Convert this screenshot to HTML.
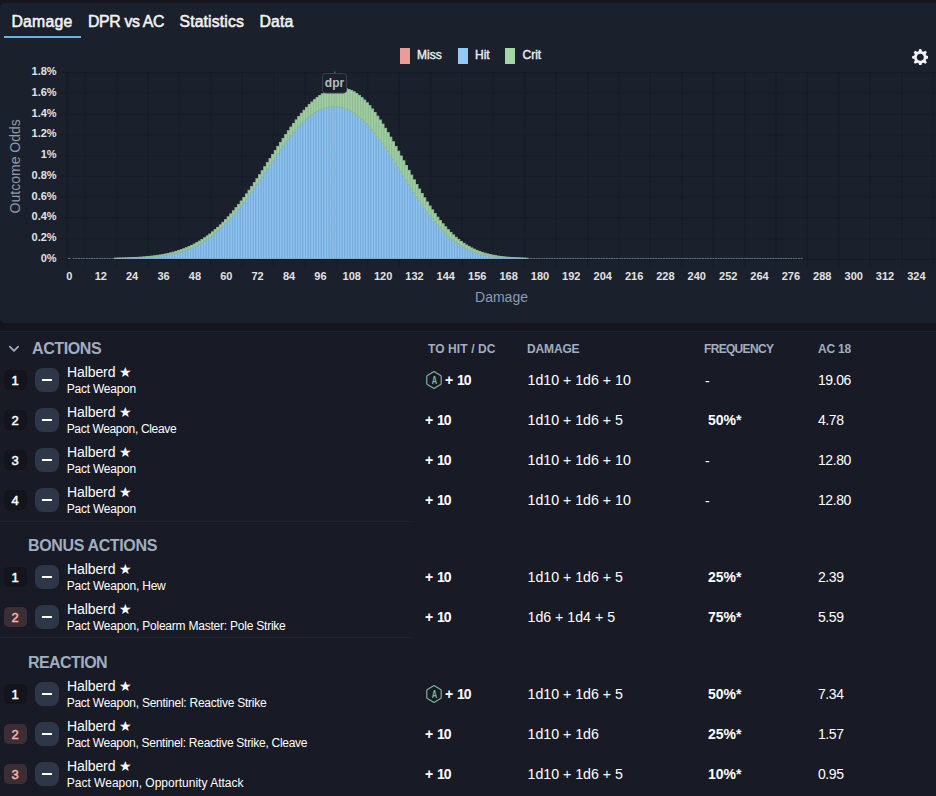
<!DOCTYPE html>
<html><head><meta charset="utf-8"><title>Damage</title>
<style>
*{box-sizing:border-box;margin:0;padding:0}
html,body{width:936px;height:796px;overflow:hidden;background:#14151d;font-family:"Liberation Sans",Arial,sans-serif;color:#fff}
.panel1{position:absolute;left:0;top:3px;width:936px;height:320px;background:#1a202c;border-radius:5px 0 0 5px}
.panel2{position:absolute;left:0;top:331px;width:936px;height:465px;background:#181a25;border-top:1px solid #1e2230}
.tabs{position:absolute;left:0;top:0;height:40px}
.tab{position:absolute;top:13px;font-size:15.8px;font-weight:400;-webkit-text-stroke:.55px #f2f2f2;color:#f2f2f2;white-space:nowrap;line-height:18px}
.ul{position:absolute;left:4px;top:36px;width:77px;height:2px;background:#63b3ed}
.chart{position:absolute;left:0;top:0}
.chart text{font-family:"Liberation Sans",Arial,sans-serif}
.grid line{stroke:rgba(0,0,0,.13);stroke-width:1}
.bars .h{fill:#8bc2f0;stroke:#7babd8;stroke-width:.95}
.bars .c{fill:#a0cfa2;stroke:#8fbc92;stroke-width:.95}
.tk{font-size:11px;font-weight:700;fill:#e2e2e2}
.lg{font-size:12px;font-weight:400;fill:#ececec;stroke:#ececec;stroke-width:.4px}
.gear{position:absolute;left:911.7px;top:48.6px}
.hd{position:absolute;font-weight:700;color:#a0aec0;white-space:nowrap}
.sec{font-size:16px;line-height:18px}
.col{font-size:12px;line-height:14px}
.row{position:absolute;left:0;width:936px;height:40px}
.bd{position:absolute;left:4px;top:10px;width:23px;height:20px;padding-right:1px;border-radius:5px;background:#13141c;color:#fff;font-size:13px;font-weight:400;-webkit-text-stroke:.5px;text-align:center;line-height:22px}
.bd.red{background:#3c2e35;color:#feb2b2}
.mn{position:absolute;left:35px;top:8px;width:24px;height:24px;border-radius:7.5px;background:#2d3748}
.mn i{position:absolute;left:7px;top:11px;width:10px;height:2px;background:#fff}
.nm{position:absolute;left:67px;top:3px;font-size:14px;letter-spacing:-.1px;line-height:18px;white-space:nowrap}
.sb{position:absolute;left:66.7px;top:22px;font-size:12px;line-height:14px;white-space:nowrap}
.th{position:absolute;top:11px;font-size:14px;font-weight:700;letter-spacing:-1.1px;word-spacing:2.2px;line-height:18px;white-space:nowrap;display:flex;align-items:center;height:18px}
.hex{display:block}
.dm{position:absolute;left:527.5px;top:11px;font-size:14.2px;line-height:18px;white-space:nowrap}
.fq{position:absolute;top:11px;font-size:14px;font-weight:700;line-height:18px;white-space:nowrap}
.fq.dash{font-weight:400;margin-top:1px}
.ac{position:absolute;left:818px;top:11px;font-size:14px;letter-spacing:-.42px;line-height:18px;white-space:nowrap}
.sep{position:absolute;left:0;width:412px;height:1px;background:#20232f}
</style></head><body>
<div class="panel1"></div>
<div class="panel2"></div>
<div class="tabs">
<div class="tab" style="left:11.5px;letter-spacing:.2px">Damage</div>
<div class="tab" style="left:88px;letter-spacing:-.33px">DPR vs AC</div>
<div class="tab" style="left:179.5px;letter-spacing:.13px">Statistics</div>
<div class="tab" style="left:259.5px;letter-spacing:.15px">Data</div>
<div class="ul"></div>
</div>
<svg class="chart" width="936" height="330" viewBox="0 0 936 330">
<g class="grid"><line x1="59" x2="936" y1="259.5" y2="259.5"/><line x1="59" x2="936" y1="238.7" y2="238.7"/><line x1="59" x2="936" y1="217.9" y2="217.9"/><line x1="59" x2="936" y1="197.2" y2="197.2"/><line x1="59" x2="936" y1="176.4" y2="176.4"/><line x1="59" x2="936" y1="155.6" y2="155.6"/><line x1="59" x2="936" y1="134.8" y2="134.8"/><line x1="59" x2="936" y1="114.1" y2="114.1"/><line x1="59" x2="936" y1="93.3" y2="93.3"/><line x1="59" x2="936" y1="72.5" y2="72.5"/><line x1="85.2" x2="85.2" y1="72" y2="267.5"/><line x1="116.6" x2="116.6" y1="72" y2="267.5"/><line x1="148.0" x2="148.0" y1="72" y2="267.5"/><line x1="179.4" x2="179.4" y1="72" y2="267.5"/><line x1="210.8" x2="210.8" y1="72" y2="267.5"/><line x1="242.2" x2="242.2" y1="72" y2="267.5"/><line x1="273.6" x2="273.6" y1="72" y2="267.5"/><line x1="305.0" x2="305.0" y1="72" y2="267.5"/><line x1="336.4" x2="336.4" y1="72" y2="267.5"/><line x1="367.8" x2="367.8" y1="72" y2="267.5"/><line x1="399.2" x2="399.2" y1="72" y2="267.5"/><line x1="430.6" x2="430.6" y1="72" y2="267.5"/><line x1="462.0" x2="462.0" y1="72" y2="267.5"/><line x1="493.4" x2="493.4" y1="72" y2="267.5"/><line x1="524.8" x2="524.8" y1="72" y2="267.5"/><line x1="556.2" x2="556.2" y1="72" y2="267.5"/><line x1="587.6" x2="587.6" y1="72" y2="267.5"/><line x1="619.0" x2="619.0" y1="72" y2="267.5"/><line x1="650.4" x2="650.4" y1="72" y2="267.5"/><line x1="681.8" x2="681.8" y1="72" y2="267.5"/><line x1="713.2" x2="713.2" y1="72" y2="267.5"/><line x1="744.6" x2="744.6" y1="72" y2="267.5"/><line x1="776.0" x2="776.0" y1="72" y2="267.5"/><line x1="807.4" x2="807.4" y1="72" y2="267.5"/><line x1="838.8" x2="838.8" y1="72" y2="267.5"/><line x1="870.2" x2="870.2" y1="72" y2="267.5"/><line x1="901.6" x2="901.6" y1="72" y2="267.5"/><line x1="933.0" x2="933.0" y1="72" y2="267.5"/><line x1="67.3" x2="67.3" y1="72" y2="267.5"/></g>
<g class="bars"><rect class="h" x="114.75" y="258.35" width="2.61" height="0.15"/><rect class="c" x="114.75" y="258.18" width="2.61" height="0.16"/><rect class="h" x="117.36" y="258.32" width="2.61" height="0.18"/><rect class="c" x="117.36" y="258.13" width="2.61" height="0.19"/><rect class="h" x="119.98" y="258.28" width="2.61" height="0.22"/><rect class="c" x="119.98" y="258.06" width="2.61" height="0.22"/><rect class="h" x="122.59" y="258.24" width="2.61" height="0.26"/><rect class="c" x="122.59" y="257.99" width="2.61" height="0.25"/><rect class="h" x="125.21" y="258.18" width="2.61" height="0.32"/><rect class="c" x="125.21" y="257.91" width="2.61" height="0.28"/><rect class="h" x="127.82" y="258.12" width="2.61" height="0.38"/><rect class="c" x="127.82" y="257.81" width="2.61" height="0.31"/><rect class="h" x="130.43" y="258.05" width="2.61" height="0.45"/><rect class="c" x="130.43" y="257.70" width="2.61" height="0.36"/><rect class="h" x="133.05" y="257.97" width="2.61" height="0.53"/><rect class="c" x="133.05" y="257.57" width="2.61" height="0.40"/><rect class="h" x="135.66" y="257.87" width="2.61" height="0.63"/><rect class="c" x="135.66" y="257.43" width="2.61" height="0.45"/><rect class="h" x="138.28" y="257.76" width="2.61" height="0.74"/><rect class="c" x="138.28" y="257.26" width="2.61" height="0.50"/><rect class="h" x="140.89" y="257.63" width="2.61" height="0.87"/><rect class="c" x="140.89" y="257.08" width="2.61" height="0.56"/><rect class="h" x="143.50" y="257.49" width="2.61" height="1.01"/><rect class="c" x="143.50" y="256.87" width="2.61" height="0.62"/><rect class="h" x="146.12" y="257.32" width="2.61" height="1.18"/><rect class="c" x="146.12" y="256.63" width="2.61" height="0.69"/><rect class="h" x="148.73" y="257.12" width="2.61" height="1.38"/><rect class="c" x="148.73" y="256.37" width="2.61" height="0.76"/><rect class="h" x="151.35" y="256.90" width="2.61" height="1.60"/><rect class="c" x="151.35" y="256.07" width="2.61" height="0.83"/><rect class="h" x="153.96" y="256.65" width="2.61" height="1.85"/><rect class="c" x="153.96" y="255.74" width="2.61" height="0.92"/><rect class="h" x="156.58" y="256.37" width="2.61" height="2.13"/><rect class="c" x="156.58" y="255.37" width="2.61" height="1.00"/><rect class="h" x="159.19" y="256.05" width="2.61" height="2.45"/><rect class="c" x="159.19" y="254.96" width="2.61" height="1.09"/><rect class="h" x="161.80" y="255.69" width="2.61" height="2.81"/><rect class="c" x="161.80" y="254.50" width="2.61" height="1.19"/><rect class="h" x="164.42" y="255.29" width="2.61" height="3.21"/><rect class="c" x="164.42" y="254.00" width="2.61" height="1.29"/><rect class="h" x="167.03" y="254.84" width="2.61" height="3.66"/><rect class="c" x="167.03" y="253.44" width="2.61" height="1.40"/><rect class="h" x="169.65" y="254.33" width="2.61" height="4.17"/><rect class="c" x="169.65" y="252.82" width="2.61" height="1.51"/><rect class="h" x="172.26" y="253.77" width="2.61" height="4.73"/><rect class="c" x="172.26" y="252.15" width="2.61" height="1.62"/><rect class="h" x="174.88" y="253.15" width="2.61" height="5.35"/><rect class="c" x="174.88" y="251.41" width="2.61" height="1.74"/><rect class="h" x="177.49" y="252.46" width="2.61" height="6.04"/><rect class="c" x="177.49" y="250.60" width="2.61" height="1.86"/><rect class="h" x="180.10" y="251.71" width="2.61" height="6.79"/><rect class="c" x="180.10" y="249.72" width="2.61" height="1.99"/><rect class="h" x="182.72" y="250.87" width="2.61" height="7.63"/><rect class="c" x="182.72" y="248.76" width="2.61" height="2.11"/><rect class="h" x="185.33" y="249.96" width="2.61" height="8.54"/><rect class="c" x="185.33" y="247.72" width="2.61" height="2.24"/><rect class="h" x="187.95" y="248.96" width="2.61" height="9.54"/><rect class="c" x="187.95" y="246.59" width="2.61" height="2.37"/><rect class="h" x="190.56" y="247.88" width="2.61" height="10.62"/><rect class="c" x="190.56" y="245.37" width="2.61" height="2.51"/><rect class="h" x="193.17" y="246.69" width="2.61" height="11.81"/><rect class="c" x="193.17" y="244.05" width="2.61" height="2.64"/><rect class="h" x="195.79" y="245.41" width="2.61" height="13.09"/><rect class="c" x="195.79" y="242.64" width="2.61" height="2.77"/><rect class="h" x="198.40" y="244.03" width="2.61" height="14.47"/><rect class="c" x="198.40" y="241.12" width="2.61" height="2.91"/><rect class="h" x="201.02" y="242.54" width="2.61" height="15.96"/><rect class="c" x="201.02" y="239.50" width="2.61" height="3.04"/><rect class="h" x="203.63" y="240.93" width="2.61" height="17.57"/><rect class="c" x="203.63" y="237.77" width="2.61" height="3.17"/><rect class="h" x="206.25" y="239.22" width="2.61" height="19.28"/><rect class="c" x="206.25" y="235.92" width="2.61" height="3.30"/><rect class="h" x="208.86" y="237.38" width="2.61" height="21.12"/><rect class="c" x="208.86" y="233.95" width="2.61" height="3.43"/><rect class="h" x="211.47" y="235.42" width="2.61" height="23.08"/><rect class="c" x="211.47" y="231.87" width="2.61" height="3.55"/><rect class="h" x="214.09" y="233.34" width="2.61" height="25.16"/><rect class="c" x="214.09" y="229.67" width="2.61" height="3.67"/><rect class="h" x="216.70" y="231.14" width="2.61" height="27.36"/><rect class="c" x="216.70" y="227.35" width="2.61" height="3.79"/><rect class="h" x="219.32" y="228.81" width="2.61" height="29.69"/><rect class="c" x="219.32" y="224.90" width="2.61" height="3.91"/><rect class="h" x="221.93" y="226.36" width="2.61" height="32.14"/><rect class="c" x="221.93" y="222.33" width="2.61" height="4.03"/><rect class="h" x="224.54" y="223.78" width="2.61" height="34.72"/><rect class="c" x="224.54" y="219.64" width="2.61" height="4.14"/><rect class="h" x="227.16" y="221.07" width="2.61" height="37.43"/><rect class="c" x="227.16" y="216.82" width="2.61" height="4.25"/><rect class="h" x="229.77" y="218.24" width="2.61" height="40.26"/><rect class="c" x="229.77" y="213.89" width="2.61" height="4.36"/><rect class="h" x="232.39" y="215.30" width="2.61" height="43.20"/><rect class="c" x="232.39" y="210.83" width="2.61" height="4.47"/><rect class="h" x="235.00" y="212.23" width="2.61" height="46.27"/><rect class="c" x="235.00" y="207.66" width="2.61" height="4.57"/><rect class="h" x="237.62" y="209.06" width="2.61" height="49.44"/><rect class="c" x="237.62" y="204.38" width="2.61" height="4.68"/><rect class="h" x="240.23" y="205.78" width="2.61" height="52.72"/><rect class="c" x="240.23" y="200.99" width="2.61" height="4.79"/><rect class="h" x="242.84" y="202.40" width="2.61" height="56.10"/><rect class="c" x="242.84" y="197.49" width="2.61" height="4.90"/><rect class="h" x="245.46" y="198.92" width="2.61" height="59.58"/><rect class="c" x="245.46" y="193.91" width="2.61" height="5.02"/><rect class="h" x="248.07" y="195.36" width="2.61" height="63.14"/><rect class="c" x="248.07" y="190.23" width="2.61" height="5.14"/><rect class="h" x="250.69" y="191.72" width="2.61" height="66.78"/><rect class="c" x="250.69" y="186.46" width="2.61" height="5.26"/><rect class="h" x="253.30" y="188.02" width="2.61" height="70.48"/><rect class="c" x="253.30" y="182.63" width="2.61" height="5.39"/><rect class="h" x="255.92" y="184.26" width="2.61" height="74.24"/><rect class="c" x="255.92" y="178.72" width="2.61" height="5.53"/><rect class="h" x="258.53" y="180.45" width="2.61" height="78.05"/><rect class="c" x="258.53" y="174.77" width="2.61" height="5.69"/><rect class="h" x="261.14" y="176.61" width="2.61" height="81.89"/><rect class="c" x="261.14" y="170.76" width="2.61" height="5.85"/><rect class="h" x="263.76" y="172.74" width="2.61" height="85.76"/><rect class="c" x="263.76" y="166.72" width="2.61" height="6.03"/><rect class="h" x="266.37" y="168.87" width="2.61" height="89.63"/><rect class="c" x="266.37" y="162.65" width="2.61" height="6.22"/><rect class="h" x="268.99" y="165.00" width="2.61" height="93.50"/><rect class="c" x="268.99" y="158.58" width="2.61" height="6.42"/><rect class="h" x="271.60" y="161.14" width="2.61" height="97.36"/><rect class="c" x="271.60" y="154.50" width="2.61" height="6.65"/><rect class="h" x="274.21" y="157.32" width="2.61" height="101.18"/><rect class="c" x="274.21" y="150.43" width="2.61" height="6.89"/><rect class="h" x="276.83" y="153.54" width="2.61" height="104.96"/><rect class="c" x="276.83" y="146.39" width="2.61" height="7.15"/><rect class="h" x="279.44" y="149.82" width="2.61" height="108.68"/><rect class="c" x="279.44" y="142.39" width="2.61" height="7.43"/><rect class="h" x="282.06" y="146.17" width="2.61" height="112.33"/><rect class="c" x="282.06" y="138.43" width="2.61" height="7.73"/><rect class="h" x="284.67" y="142.60" width="2.61" height="115.90"/><rect class="c" x="284.67" y="134.55" width="2.61" height="8.06"/><rect class="h" x="287.29" y="139.14" width="2.61" height="119.36"/><rect class="c" x="287.29" y="130.74" width="2.61" height="8.41"/><rect class="h" x="289.90" y="135.79" width="2.61" height="122.71"/><rect class="c" x="289.90" y="127.02" width="2.61" height="8.78"/><rect class="h" x="292.51" y="132.57" width="2.61" height="125.93"/><rect class="c" x="292.51" y="123.40" width="2.61" height="9.17"/><rect class="h" x="295.13" y="129.49" width="2.61" height="129.01"/><rect class="c" x="295.13" y="119.90" width="2.61" height="9.59"/><rect class="h" x="297.74" y="126.56" width="2.61" height="131.94"/><rect class="c" x="297.74" y="116.53" width="2.61" height="10.02"/><rect class="h" x="300.36" y="123.79" width="2.61" height="134.71"/><rect class="c" x="300.36" y="113.31" width="2.61" height="10.48"/><rect class="h" x="302.97" y="121.20" width="2.61" height="137.30"/><rect class="c" x="302.97" y="110.23" width="2.61" height="10.96"/><rect class="h" x="305.58" y="118.79" width="2.61" height="139.71"/><rect class="c" x="305.58" y="107.32" width="2.61" height="11.46"/><rect class="h" x="308.20" y="116.57" width="2.61" height="141.93"/><rect class="c" x="308.20" y="104.59" width="2.61" height="11.98"/><rect class="h" x="310.81" y="114.55" width="2.61" height="143.95"/><rect class="c" x="310.81" y="102.04" width="2.61" height="12.52"/><rect class="h" x="313.43" y="112.75" width="2.61" height="145.75"/><rect class="c" x="313.43" y="99.68" width="2.61" height="13.07"/><rect class="h" x="316.04" y="111.15" width="2.61" height="147.35"/><rect class="c" x="316.04" y="97.52" width="2.61" height="13.63"/><rect class="h" x="318.66" y="109.78" width="2.61" height="148.72"/><rect class="c" x="318.66" y="95.58" width="2.61" height="14.20"/><rect class="h" x="321.27" y="108.63" width="2.61" height="149.87"/><rect class="c" x="321.27" y="93.85" width="2.61" height="14.79"/><rect class="h" x="323.88" y="107.71" width="2.61" height="150.79"/><rect class="c" x="323.88" y="92.34" width="2.61" height="15.38"/><rect class="h" x="326.50" y="107.02" width="2.61" height="151.48"/><rect class="c" x="326.50" y="91.05" width="2.61" height="15.97"/><rect class="h" x="329.11" y="106.56" width="2.61" height="151.94"/><rect class="c" x="329.11" y="90.00" width="2.61" height="16.56"/><rect class="h" x="331.73" y="106.33" width="2.61" height="152.17"/><rect class="c" x="331.73" y="89.18" width="2.61" height="17.15"/><rect class="h" x="334.34" y="106.33" width="2.61" height="152.17"/><rect class="c" x="334.34" y="88.59" width="2.61" height="17.74"/><rect class="h" x="336.96" y="106.55" width="2.61" height="151.95"/><rect class="c" x="336.96" y="88.24" width="2.61" height="18.31"/><rect class="h" x="339.57" y="106.99" width="2.61" height="151.51"/><rect class="c" x="339.57" y="88.12" width="2.61" height="18.87"/><rect class="h" x="342.18" y="107.66" width="2.61" height="150.84"/><rect class="c" x="342.18" y="88.27" width="2.61" height="19.39"/><rect class="h" x="344.80" y="108.55" width="2.61" height="149.95"/><rect class="c" x="344.80" y="88.71" width="2.61" height="19.84"/><rect class="h" x="347.41" y="109.68" width="2.61" height="148.82"/><rect class="c" x="347.41" y="89.45" width="2.61" height="20.23"/><rect class="h" x="350.03" y="111.03" width="2.61" height="147.47"/><rect class="c" x="350.03" y="90.48" width="2.61" height="20.55"/><rect class="h" x="352.64" y="112.61" width="2.61" height="145.89"/><rect class="c" x="352.64" y="91.81" width="2.61" height="20.80"/><rect class="h" x="355.25" y="114.41" width="2.61" height="144.09"/><rect class="c" x="355.25" y="93.43" width="2.61" height="20.97"/><rect class="h" x="357.87" y="116.43" width="2.61" height="142.07"/><rect class="c" x="357.87" y="95.35" width="2.61" height="21.09"/><rect class="h" x="360.48" y="118.67" width="2.61" height="139.83"/><rect class="c" x="360.48" y="97.54" width="2.61" height="21.13"/><rect class="h" x="363.10" y="121.12" width="2.61" height="137.38"/><rect class="c" x="363.10" y="100.01" width="2.61" height="21.11"/><rect class="h" x="365.71" y="123.77" width="2.61" height="134.73"/><rect class="c" x="365.71" y="102.75" width="2.61" height="21.02"/><rect class="h" x="368.33" y="126.62" width="2.61" height="131.88"/><rect class="c" x="368.33" y="105.74" width="2.61" height="20.88"/><rect class="h" x="370.94" y="129.65" width="2.61" height="128.85"/><rect class="c" x="370.94" y="108.98" width="2.61" height="20.67"/><rect class="h" x="373.55" y="132.86" width="2.61" height="125.64"/><rect class="c" x="373.55" y="112.45" width="2.61" height="20.41"/><rect class="h" x="376.17" y="136.23" width="2.61" height="122.27"/><rect class="c" x="376.17" y="116.13" width="2.61" height="20.10"/><rect class="h" x="378.78" y="139.76" width="2.61" height="118.74"/><rect class="c" x="378.78" y="120.01" width="2.61" height="19.75"/><rect class="h" x="381.40" y="143.42" width="2.61" height="115.08"/><rect class="c" x="381.40" y="124.07" width="2.61" height="19.34"/><rect class="h" x="384.01" y="147.20" width="2.61" height="111.30"/><rect class="c" x="384.01" y="128.30" width="2.61" height="18.90"/><rect class="h" x="386.62" y="151.09" width="2.61" height="107.41"/><rect class="c" x="386.62" y="132.67" width="2.61" height="18.43"/><rect class="h" x="389.24" y="155.08" width="2.61" height="103.42"/><rect class="c" x="389.24" y="137.16" width="2.61" height="17.92"/><rect class="h" x="391.85" y="159.14" width="2.61" height="99.36"/><rect class="c" x="391.85" y="141.76" width="2.61" height="17.38"/><rect class="h" x="394.47" y="163.27" width="2.61" height="95.23"/><rect class="c" x="394.47" y="146.44" width="2.61" height="16.83"/><rect class="h" x="397.08" y="167.44" width="2.61" height="91.06"/><rect class="c" x="397.08" y="151.19" width="2.61" height="16.25"/><rect class="h" x="399.70" y="171.64" width="2.61" height="86.86"/><rect class="c" x="399.70" y="155.98" width="2.61" height="15.66"/><rect class="h" x="402.31" y="175.84" width="2.61" height="82.66"/><rect class="c" x="402.31" y="160.79" width="2.61" height="15.06"/><rect class="h" x="404.92" y="180.05" width="2.61" height="78.45"/><rect class="c" x="404.92" y="165.60" width="2.61" height="14.45"/><rect class="h" x="407.54" y="184.23" width="2.61" height="74.27"/><rect class="c" x="407.54" y="170.39" width="2.61" height="13.84"/><rect class="h" x="410.15" y="188.37" width="2.61" height="70.13"/><rect class="c" x="410.15" y="175.14" width="2.61" height="13.23"/><rect class="h" x="412.77" y="192.46" width="2.61" height="66.04"/><rect class="c" x="412.77" y="179.84" width="2.61" height="12.62"/><rect class="h" x="415.38" y="196.48" width="2.61" height="62.02"/><rect class="c" x="415.38" y="184.47" width="2.61" height="12.01"/><rect class="h" x="418.00" y="200.43" width="2.61" height="58.07"/><rect class="c" x="418.00" y="189.01" width="2.61" height="11.42"/><rect class="h" x="420.61" y="204.28" width="2.61" height="54.22"/><rect class="c" x="420.61" y="193.44" width="2.61" height="10.83"/><rect class="h" x="423.22" y="208.02" width="2.61" height="50.48"/><rect class="c" x="423.22" y="197.76" width="2.61" height="10.26"/><rect class="h" x="425.84" y="211.64" width="2.61" height="46.86"/><rect class="c" x="425.84" y="201.95" width="2.61" height="9.70"/><rect class="h" x="428.45" y="215.14" width="2.61" height="43.36"/><rect class="c" x="428.45" y="205.99" width="2.61" height="9.15"/><rect class="h" x="431.07" y="218.50" width="2.61" height="40.00"/><rect class="c" x="431.07" y="209.88" width="2.61" height="8.62"/><rect class="h" x="433.68" y="221.73" width="2.61" height="36.77"/><rect class="c" x="433.68" y="213.62" width="2.61" height="8.11"/><rect class="h" x="436.29" y="224.80" width="2.61" height="33.70"/><rect class="c" x="436.29" y="217.19" width="2.61" height="7.61"/><rect class="h" x="438.91" y="227.72" width="2.61" height="30.78"/><rect class="c" x="438.91" y="220.58" width="2.61" height="7.13"/><rect class="h" x="441.52" y="230.48" width="2.61" height="28.02"/><rect class="c" x="441.52" y="223.81" width="2.61" height="6.68"/><rect class="h" x="444.14" y="233.09" width="2.61" height="25.41"/><rect class="c" x="444.14" y="226.85" width="2.61" height="6.23"/><rect class="h" x="446.75" y="235.53" width="2.61" height="22.97"/><rect class="c" x="446.75" y="229.72" width="2.61" height="5.81"/><rect class="h" x="449.37" y="237.82" width="2.61" height="20.68"/><rect class="c" x="449.37" y="232.41" width="2.61" height="5.41"/><rect class="h" x="451.98" y="239.95" width="2.61" height="18.55"/><rect class="c" x="451.98" y="234.93" width="2.61" height="5.02"/><rect class="h" x="454.59" y="241.92" width="2.61" height="16.58"/><rect class="c" x="454.59" y="237.27" width="2.61" height="4.65"/><rect class="h" x="457.21" y="243.74" width="2.61" height="14.76"/><rect class="c" x="457.21" y="239.44" width="2.61" height="4.30"/><rect class="h" x="459.82" y="245.42" width="2.61" height="13.08"/><rect class="c" x="459.82" y="241.45" width="2.61" height="3.97"/><rect class="h" x="462.44" y="246.95" width="2.61" height="11.55"/><rect class="c" x="462.44" y="243.29" width="2.61" height="3.66"/><rect class="h" x="465.05" y="248.35" width="2.61" height="10.15"/><rect class="c" x="465.05" y="244.99" width="2.61" height="3.36"/><rect class="h" x="467.67" y="249.61" width="2.61" height="8.89"/><rect class="c" x="467.67" y="246.54" width="2.61" height="3.08"/><rect class="h" x="470.28" y="250.75" width="2.61" height="7.75"/><rect class="c" x="470.28" y="247.94" width="2.61" height="2.81"/><rect class="h" x="472.89" y="251.78" width="2.61" height="6.72"/><rect class="c" x="472.89" y="249.22" width="2.61" height="2.56"/><rect class="h" x="475.51" y="252.70" width="2.61" height="5.80"/><rect class="c" x="475.51" y="250.37" width="2.61" height="2.32"/><rect class="h" x="478.12" y="253.51" width="2.61" height="4.99"/><rect class="c" x="478.12" y="251.41" width="2.61" height="2.10"/><rect class="h" x="480.74" y="254.23" width="2.61" height="4.27"/><rect class="c" x="480.74" y="252.33" width="2.61" height="1.90"/><rect class="h" x="483.35" y="254.87" width="2.61" height="3.63"/><rect class="c" x="483.35" y="253.16" width="2.61" height="1.71"/><rect class="h" x="485.96" y="255.42" width="2.61" height="3.08"/><rect class="c" x="485.96" y="253.89" width="2.61" height="1.53"/><rect class="h" x="488.58" y="255.91" width="2.61" height="2.59"/><rect class="c" x="488.58" y="254.54" width="2.61" height="1.37"/><rect class="h" x="491.19" y="256.33" width="2.61" height="2.17"/><rect class="c" x="491.19" y="255.11" width="2.61" height="1.22"/><rect class="h" x="493.81" y="256.69" width="2.61" height="1.81"/><rect class="c" x="493.81" y="255.61" width="2.61" height="1.08"/><rect class="h" x="496.42" y="257.00" width="2.61" height="1.50"/><rect class="c" x="496.42" y="256.05" width="2.61" height="0.95"/><rect class="h" x="499.04" y="257.26" width="2.61" height="1.24"/><rect class="c" x="499.04" y="256.43" width="2.61" height="0.83"/><rect class="h" x="501.65" y="257.49" width="2.61" height="1.01"/><rect class="c" x="501.65" y="256.76" width="2.61" height="0.73"/><rect class="h" x="504.26" y="257.67" width="2.61" height="0.83"/><rect class="c" x="504.26" y="257.04" width="2.61" height="0.64"/><rect class="h" x="506.88" y="257.83" width="2.61" height="0.67"/><rect class="c" x="506.88" y="257.28" width="2.61" height="0.55"/><rect class="h" x="509.49" y="257.96" width="2.61" height="0.54"/><rect class="c" x="509.49" y="257.49" width="2.61" height="0.47"/><rect class="h" x="512.11" y="258.07" width="2.61" height="0.43"/><rect class="c" x="512.11" y="257.66" width="2.61" height="0.41"/><rect class="h" x="514.72" y="258.16" width="2.61" height="0.34"/><rect class="c" x="514.72" y="257.81" width="2.61" height="0.35"/><rect class="h" x="517.33" y="258.23" width="2.61" height="0.27"/><rect class="c" x="517.33" y="257.94" width="2.61" height="0.29"/><rect class="h" x="519.95" y="258.29" width="2.61" height="0.21"/><rect class="c" x="519.95" y="258.04" width="2.61" height="0.25"/><rect class="h" x="522.56" y="258.34" width="2.61" height="0.16"/><rect class="c" x="522.56" y="258.13" width="2.61" height="0.21"/><rect class="c" x="525.18" y="258.20" width="2.61" height="0.17"/></g>
<line x1="72.7" x2="785" y1="258.5" y2="258.5" stroke="#7fb0dc" stroke-width="1" stroke-dasharray="2.1 .5" opacity=".55"/>
<line x1="785" x2="802.6" y1="258.5" y2="258.5" stroke="#9ccf9f" stroke-width="1" stroke-dasharray="1.9 .7" opacity=".5"/>
<rect x="67.9" y="258" width="2.7" height="1" fill="#ef9a9a" opacity=".55"/>
<line x1="334.8" x2="334.8" y1="71.5" y2="258.5" stroke="#a4a8ae" stroke-width="1.4" stroke-dasharray="7.7 6.4" stroke-dashoffset="3.1" opacity=".5"/>
<rect x="322.5" y="73.5" width="24" height="19.5" rx="3" fill="#1a202c" stroke="#3b404b" stroke-width="1"/>
<text x="334.5" y="87.3" text-anchor="middle" font-size="12" font-weight="700" fill="#bcbcbc">dpr</text>
<g><text class="tk" x="56.6" y="262.0" text-anchor="end">0%</text><text class="tk" x="56.6" y="241.2" text-anchor="end">0.2%</text><text class="tk" x="56.6" y="220.4" text-anchor="end">0.4%</text><text class="tk" x="56.6" y="199.7" text-anchor="end">0.6%</text><text class="tk" x="56.6" y="178.9" text-anchor="end">0.8%</text><text class="tk" x="56.6" y="158.1" text-anchor="end">1%</text><text class="tk" x="56.6" y="137.3" text-anchor="end">1.2%</text><text class="tk" x="56.6" y="116.6" text-anchor="end">1.4%</text><text class="tk" x="56.6" y="95.8" text-anchor="end">1.6%</text><text class="tk" x="56.6" y="75.0" text-anchor="end">1.8%</text><text class="tk" x="69.4" y="280" text-anchor="middle">0</text><text class="tk" x="100.8" y="280" text-anchor="middle">12</text><text class="tk" x="132.1" y="280" text-anchor="middle">24</text><text class="tk" x="163.5" y="280" text-anchor="middle">36</text><text class="tk" x="194.9" y="280" text-anchor="middle">48</text><text class="tk" x="226.3" y="280" text-anchor="middle">60</text><text class="tk" x="257.6" y="280" text-anchor="middle">72</text><text class="tk" x="289.0" y="280" text-anchor="middle">84</text><text class="tk" x="320.4" y="280" text-anchor="middle">96</text><text class="tk" x="351.7" y="280" text-anchor="middle">108</text><text class="tk" x="383.1" y="280" text-anchor="middle">120</text><text class="tk" x="414.5" y="280" text-anchor="middle">132</text><text class="tk" x="445.8" y="280" text-anchor="middle">144</text><text class="tk" x="477.2" y="280" text-anchor="middle">156</text><text class="tk" x="508.6" y="280" text-anchor="middle">168</text><text class="tk" x="540.0" y="280" text-anchor="middle">180</text><text class="tk" x="571.3" y="280" text-anchor="middle">192</text><text class="tk" x="602.7" y="280" text-anchor="middle">204</text><text class="tk" x="634.1" y="280" text-anchor="middle">216</text><text class="tk" x="665.4" y="280" text-anchor="middle">228</text><text class="tk" x="696.8" y="280" text-anchor="middle">240</text><text class="tk" x="728.2" y="280" text-anchor="middle">252</text><text class="tk" x="759.5" y="280" text-anchor="middle">264</text><text class="tk" x="790.9" y="280" text-anchor="middle">276</text><text class="tk" x="822.3" y="280" text-anchor="middle">288</text><text class="tk" x="853.7" y="280" text-anchor="middle">300</text><text class="tk" x="885.0" y="280" text-anchor="middle">312</text><text class="tk" x="916.4" y="280" text-anchor="middle">324</text></g>
<text x="501.5" y="302" text-anchor="middle" font-size="14" fill="#8f9bb0">Damage</text>
<text transform="translate(20,166.3) rotate(-90)" text-anchor="middle" font-size="14" fill="#8f9bb0">Outcome Odds</text>
<rect x="400" y="48" width="10" height="16" fill="#ef9a9a"/><text class="lg" x="417" y="59.3">Miss</text>
<rect x="458" y="48" width="10" height="16" fill="#90caf9"/><text class="lg" x="475" y="59.3">Hit</text>
<rect x="505" y="48" width="10" height="16" fill="#a5d6a7"/><text class="lg" x="522.5" y="59.3">Crit</text>
</svg>
<svg class="gear" width="16.6" height="16.6" viewBox="0 0 14 14"><path fill="#f2f2f2" d="M14,7.77 L14,6.17 L12.06,5.53 L11.61,4.44 L12.49,2.6 L11.36,1.47 L9.55,2.38 L8.46,1.93 L7.77,0.01 L6.17,0.01 L5.54,1.95 L4.43,2.4 L2.59,1.52 L1.46,2.65 L2.37,4.46 L1.92,5.55 L0,6.23 L0,7.82 L1.94,8.46 L2.39,9.55 L1.51,11.39 L2.64,12.52 L4.45,11.61 L5.54,12.06 L6.23,13.98 L7.82,13.98 L8.45,12.04 L9.56,11.59 L11.4,12.47 L12.53,11.34 L11.61,9.53 L12.08,8.44 L14,7.75 L14,7.77 Z M7,10 C5.34,10 4,8.66 4,7 C4,5.34 5.34,4 7,4 C8.66,4 10,5.34 10,7 C10,8.66 8.66,10 7,10 Z"/></svg>
<svg style="position:absolute;left:8px;top:343.5px" width="12" height="10" viewBox="0 0 12 10"><path d="M1.8 2.6 L6 6.9 L10.2 2.6" fill="none" stroke="#a0aec0" stroke-width="1.7" stroke-linecap="round" stroke-linejoin="round"/></svg>
<div class="hd sec" style="left:32px;top:340px;letter-spacing:-.39px">ACTIONS</div>
<div class="hd col" style="left:428px;top:342px;letter-spacing:.1px">TO HIT / DC</div>
<div class="hd col" style="left:527px;top:342px;letter-spacing:-.15px">DAMAGE</div>
<div class="hd col" style="left:704px;top:342px;letter-spacing:-.68px">FREQUENCY</div>
<div class="hd col" style="left:818px;top:342px;letter-spacing:-.2px">AC 18</div>
<div class="sep" style="top:521px"></div>
<div class="hd sec" style="left:28px;top:537px;letter-spacing:-.36px">BONUS ACTIONS</div>
<div class="sep" style="top:637px"></div>
<div class="hd sec" style="left:28px;top:654px;letter-spacing:-.57px">REACTION</div>
<div class="row" style="top:360px">
<div class="bd">1</div><div class="mn"><i></i></div>
<div class="nm">Halberd ★</div><div class="sb" style="letter-spacing:-0.23px">Pact Weapon</div>
<div class="th" style="left:425px"><svg class="hex" width="18" height="20" viewBox="0 0 18 20"><path d="M9 1.6 L15.6 5.4 Q16.2 5.8 16.2 6.5 L16.2 13.5 Q16.2 14.2 15.6 14.6 L9 18.4 L2.4 14.6 Q1.8 14.2 1.8 13.5 L1.8 6.5 Q1.8 5.8 2.4 5.4 Z" fill="none" stroke="#7dba98" stroke-width="1.15" stroke-linejoin="round"/><text transform="translate(9,13.9) scale(.68,1)" text-anchor="middle" font-size="11" font-family="Liberation Sans, Arial, sans-serif" fill="#7dba98">A</text></svg><span style="margin-left:2px">+ 10</span></div><div class="dm">1d10 + 1d6 + 10</div><div class="fq dash" style="left:705px">-</div><div class="ac">19.06</div></div><div class="row" style="top:400px">
<div class="bd">2</div><div class="mn"><i></i></div>
<div class="nm">Halberd ★</div><div class="sb" style="letter-spacing:-0.33px">Pact Weapon, Cleave</div>
<div class="th" style="left:425px">+ 10</div><div class="dm">1d10 + 1d6 + 5</div><div class="fq" style="left:708px">50%*</div><div class="ac">4.78</div></div><div class="row" style="top:440px">
<div class="bd">3</div><div class="mn"><i></i></div>
<div class="nm">Halberd ★</div><div class="sb" style="letter-spacing:-0.23px">Pact Weapon</div>
<div class="th" style="left:425px">+ 10</div><div class="dm">1d10 + 1d6 + 10</div><div class="fq dash" style="left:705px">-</div><div class="ac">12.80</div></div><div class="row" style="top:480px">
<div class="bd">4</div><div class="mn"><i></i></div>
<div class="nm">Halberd ★</div><div class="sb" style="letter-spacing:-0.23px">Pact Weapon</div>
<div class="th" style="left:425px">+ 10</div><div class="dm">1d10 + 1d6 + 10</div><div class="fq dash" style="left:705px">-</div><div class="ac">12.80</div></div><div class="row" style="top:557px">
<div class="bd">1</div><div class="mn"><i></i></div>
<div class="nm">Halberd ★</div><div class="sb" style="letter-spacing:-0.23px">Pact Weapon, Hew</div>
<div class="th" style="left:425px">+ 10</div><div class="dm">1d10 + 1d6 + 5</div><div class="fq" style="left:708px">25%*</div><div class="ac">2.39</div></div><div class="row" style="top:597px">
<div class="bd red">2</div><div class="mn"><i></i></div>
<div class="nm">Halberd ★</div><div class="sb" style="letter-spacing:-0.225px">Pact Weapon, Polearm Master: Pole Strike</div>
<div class="th" style="left:425px">+ 10</div><div class="dm">1d6 + 1d4 + 5</div><div class="fq" style="left:708px">75%*</div><div class="ac">5.59</div></div><div class="row" style="top:674px">
<div class="bd">1</div><div class="mn"><i></i></div>
<div class="nm">Halberd ★</div><div class="sb" style="letter-spacing:-0.25px">Pact Weapon, Sentinel: Reactive Strike</div>
<div class="th" style="left:425px"><svg class="hex" width="18" height="20" viewBox="0 0 18 20"><path d="M9 1.6 L15.6 5.4 Q16.2 5.8 16.2 6.5 L16.2 13.5 Q16.2 14.2 15.6 14.6 L9 18.4 L2.4 14.6 Q1.8 14.2 1.8 13.5 L1.8 6.5 Q1.8 5.8 2.4 5.4 Z" fill="none" stroke="#7dba98" stroke-width="1.15" stroke-linejoin="round"/><text transform="translate(9,13.9) scale(.68,1)" text-anchor="middle" font-size="11" font-family="Liberation Sans, Arial, sans-serif" fill="#7dba98">A</text></svg><span style="margin-left:2px">+ 10</span></div><div class="dm">1d10 + 1d6 + 5</div><div class="fq" style="left:708px">50%*</div><div class="ac">7.34</div></div><div class="row" style="top:714px">
<div class="bd red">2</div><div class="mn"><i></i></div>
<div class="nm">Halberd ★</div><div class="sb" style="letter-spacing:-0.277px">Pact Weapon, Sentinel: Reactive Strike, Cleave</div>
<div class="th" style="left:425px">+ 10</div><div class="dm">1d10 + 1d6</div><div class="fq" style="left:708px">25%*</div><div class="ac">1.57</div></div><div class="row" style="top:754px">
<div class="bd red">3</div><div class="mn"><i></i></div>
<div class="nm">Halberd ★</div><div class="sb" style="letter-spacing:0.011px">Pact Weapon, Opportunity Attack</div>
<div class="th" style="left:425px">+ 10</div><div class="dm">1d10 + 1d6 + 5</div><div class="fq" style="left:708px">10%*</div><div class="ac">0.95</div></div>
</body></html>
